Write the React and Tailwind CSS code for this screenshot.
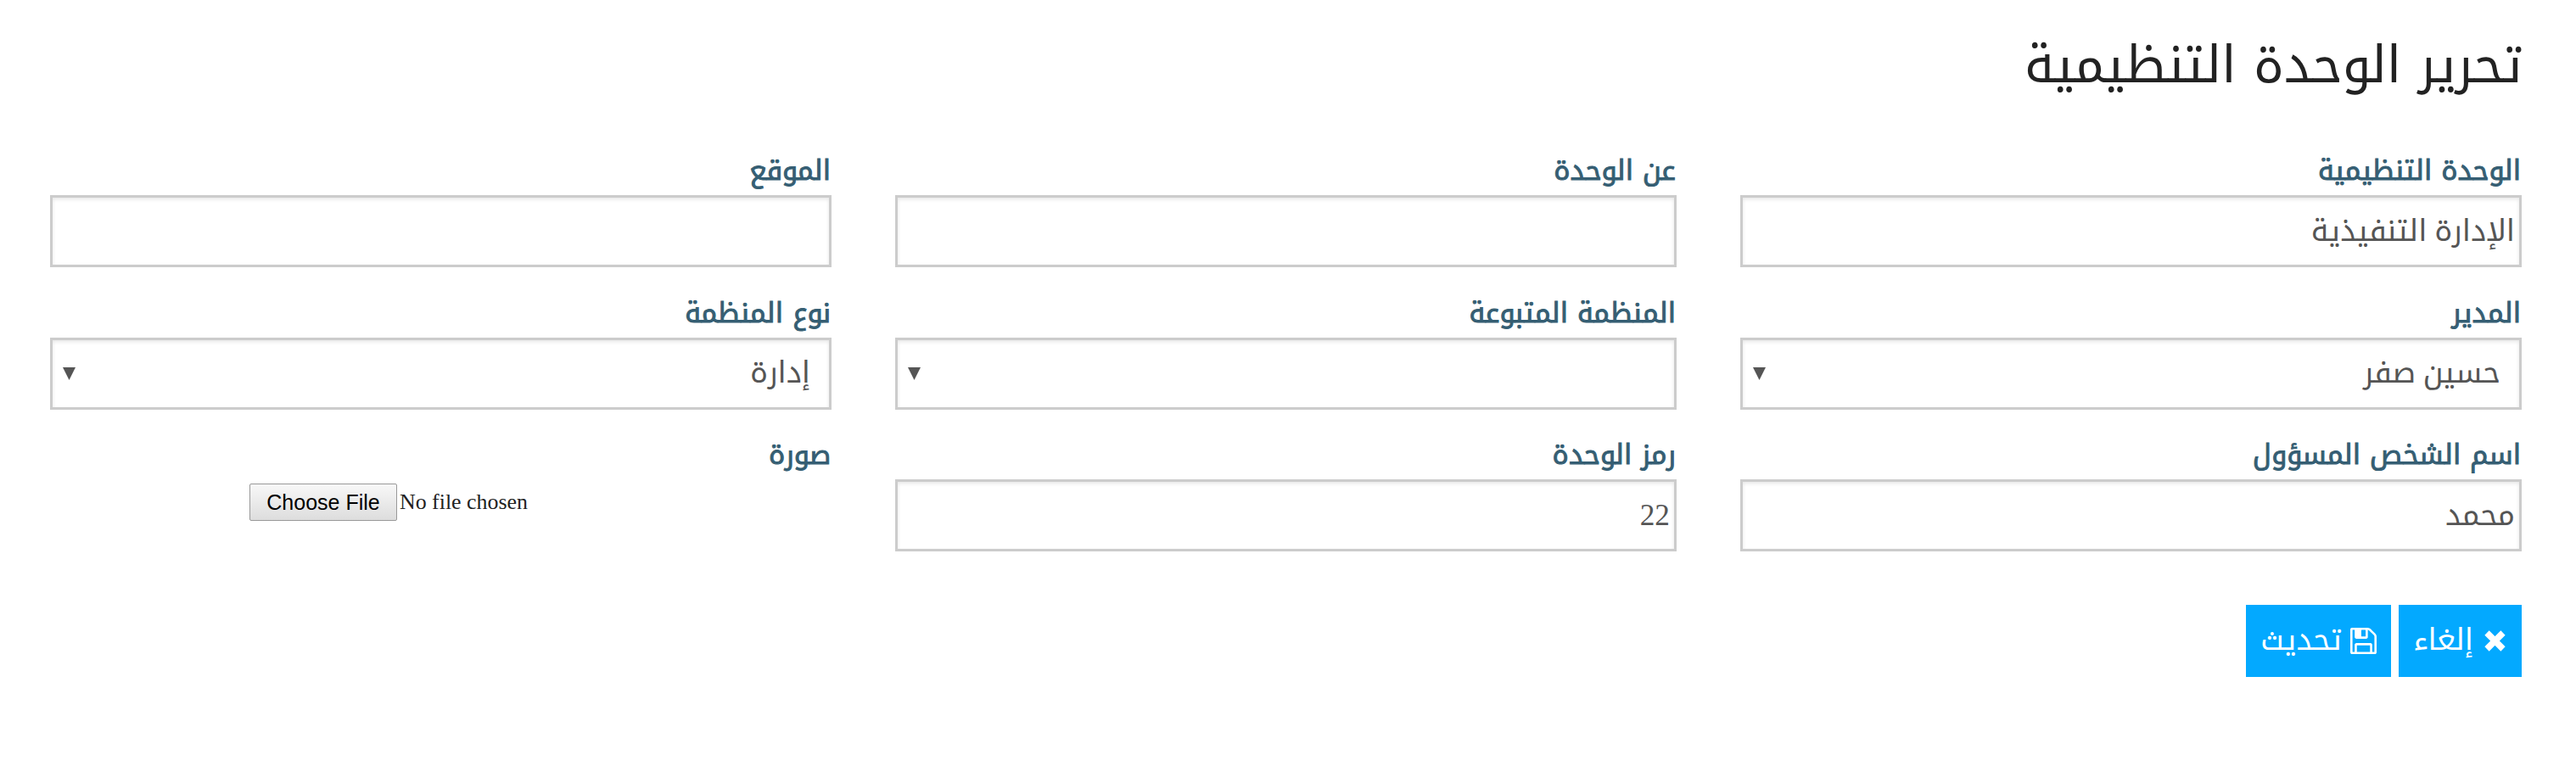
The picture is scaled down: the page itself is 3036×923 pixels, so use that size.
import React from 'react';

const fields = [
  { label: 'الوحدة التنظيمية', type: 'input', value: 'الإدارة التنفيذية' },
  { label: 'عن الوحدة', type: 'input', value: '' },
  { label: 'الموقع', type: 'input', value: '' },
  { label: 'المدير', type: 'select', value: 'حسين صفر' },
  { label: 'المنظمة المتبوعة', type: 'select', value: '' },
  { label: 'نوع المنظمة', type: 'select', value: 'إدارة' },
  { label: 'اسم الشخص المسؤول', type: 'input', value: 'محمد' },
  { label: 'رمز الوحدة', type: 'input', value: '22' },
  { label: 'صورة', type: 'file' },
];

const box =
  "flex h-[85px] items-center border-[3px] border-[#cccccc] bg-white font-['Liberation_Serif','Noto_Kufi_Arabic',serif] text-[35.3px] leading-[60px] text-[#555555] shadow-[inset_0_2px_4px_rgba(0,0,0,0.1)]";

function Label({ children }) {
  return (
    <div className="flex h-[62px] items-center pt-[6px] pr-[1px] text-[32.3px] leading-[56px] text-[#355e73] [-webkit-text-stroke:1px_#355e73]">
      <span>{children}</span>
    </div>
  );
}

function Control({ type, value }) {
  if (type === 'file') {
    return (
      <div dir="ltr" className="flex h-[85px] items-start pt-[5px] pl-[235px]">
        <button
          type="button"
          className="flex h-[44px] w-[174px] items-center justify-center rounded-[2px] border border-[#999999] bg-linear-to-b from-[#f8f8f8] to-[#dddddd] font-['Liberation_Sans',sans-serif] text-[25px] leading-[30px] text-black"
        >
          Choose File
        </button>
        <span className="pl-[3px] font-['Liberation_Serif',serif] text-[25.9px] leading-[44px] text-[#222222]">
          No file chosen
        </span>
      </div>
    );
  }
  if (type === 'select') {
    return (
      <div className={`${box} justify-between pr-[22px] pl-[12px]`}>
        <span>{value}</span>
        <svg className="h-[15px] w-[15px]" viewBox="0 0 15 15" fill="#555555">
          <path d="M0 0h15L7.500 15z" />
        </svg>
      </div>
    );
  }
  return (
    <div className={`${box} px-[5px]`}>
      <span>{value}</span>
    </div>
  );
}

function CloseIcon() {
  return (
    <svg className="h-[25px] w-[25px]" viewBox="0 0 25 25" fill="none" stroke="white" strokeWidth="7.500">
      <path d="M3 3L22 22M22 3L3 22" />
    </svg>
  );
}

function SaveIcon() {
  return (
    <svg className="h-[31px] w-[31px]" viewBox="0 0 1536 1536" fill="white">
      <path d="M384 1408h768v-384H384v384zm896 0h128V512q0-14-10-38.500t-20-34.500l-281-281q-10-10-34-20t-39-10v416q0 40-28 68t-68 28H352q-40 0-68-28t-28-68V128H128v1280h128V992q0-40 28-68t68-28h832q40 0 68 28t28 68v416zM896 480V160q0-13-9.500-22.500T864 128H672q-13 0-22.500 9.500T640 160v320q0 13 9.500 22.500T672 512h192q13 0 22.500-9.500T896 480zm640 32v928q0 40-28 68t-68 28H96q-40 0-68-28t-28-68V96q0-40 28-68T96 0h928q40 0 88 20t76 48l280 280q28 28 48 76t20 88z" />
    </svg>
  );
}

export default function App() {
  return (
    <div
      dir="rtl"
      className="h-[923px] w-[3036px] bg-white pr-[64px] pl-[59px] font-['Noto_Kufi_Arabic','Noto_Sans',sans-serif]"
    >
      <h1 className="-mr-[1px] flex h-[168px] pt-[21px] text-[60px] leading-[112px] text-[#222222]">
        تحرير الوحدة التنظيمية
      </h1>
      <form className="grid grid-cols-[921px_921px_921px] justify-between gap-y-[20.5px]">
        {fields.map((field) => (
          <div key={field.label} className="flex flex-col">
            <Label>{field.label}</Label>
            <Control {...field} />
          </div>
        ))}
      </form>
      <div className="mt-[63px] flex gap-[9px] text-[35.3px] leading-[60px] text-white">
        <button type="button" className="flex h-[85px] w-[145px] items-center bg-[#03a9ff] pr-[19px]">
          <CloseIcon />
          <span className="pr-[13px] pb-[2px]">إلغاء</span>
        </button>
        <button type="button" className="flex h-[85px] w-[171px] items-center bg-[#03a9ff] pr-[17px]">
          <SaveIcon />
          <span className="pr-[10px] pb-[2px]">تحديث</span>
        </button>
      </div>
    </div>
  );
}
